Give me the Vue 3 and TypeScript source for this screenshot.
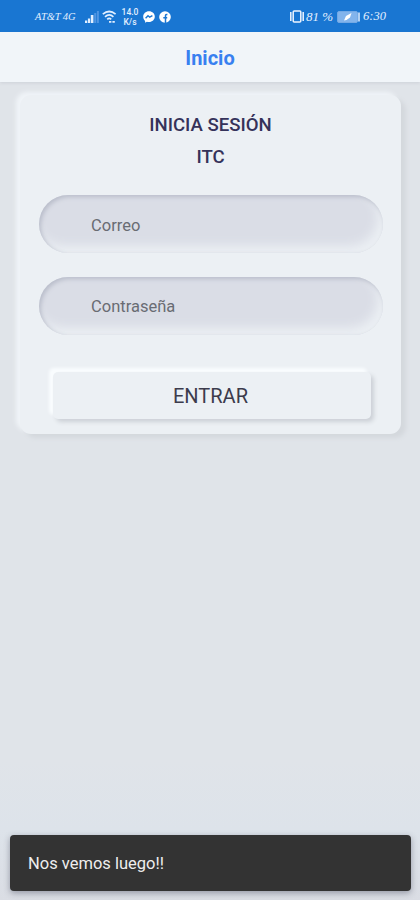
<script setup lang="ts">
import { ref } from 'vue'

const email = ref<string>('')
const password = ref<string>('')
</script>

<template>
  <div class="screen">
    <div class="status">
      <div class="group left">
        <span class="carrier">AT&amp;T 4G</span>
        <svg class="signal" width="15" height="12" viewBox="0 0 15 12">
          <path d="M0 12V9.500h2.200V12zM2.900 12V7.500h2.200V12zM5.800 12V4h2.600v8z" fill="#e2efff" />
          <path d="M9.200 12V2h2v10zM11.900 12V0h2v12z" fill="#4f95e2" />
        </svg>
        <svg class="wifi" width="15" height="13" viewBox="0 0 15 13" fill="none" stroke="#e2efff" stroke-width="1.700">
          <path d="M.8 4.2Q7.2-1.2 13.6 4.2M3 6.8Q7.2 3 11.4 6.8M5.2 9.4Q7.2 7.400 9.2 9.400" />
          <path d="M7 11.800h6" stroke-dasharray="2.400 1" />
        </svg>
        <span class="rate"><span>14.0</span><span>K/s</span></span>
        <svg class="chat" width="12" height="12" viewBox="0 0 12 12">
          <path d="M6 .2C2.700.2.2 2.600.2 5.700c0 1.700.7 3.200 1.900 4.200v1.900l1.800-1c.7.2 1.400.3 2.100.3 3.300 0 5.800-2.400 5.800-5.500S9.300.2 6 .2z" fill="#fff" />
          <path d="M2.600 7.200 5 4.700 6.700 6.200 9.400 4.600" fill="none" stroke="#1976d2" stroke-width="1.400" />
        </svg>
        <svg class="social" width="12" height="12" viewBox="0 0 12 12">
          <circle cx="6" cy="6" r="5.800" fill="#fff" />
          <path d="M6.500 12V4.800q0-1.500 1.900-1.300M4.300 6.700h3.900" fill="none" stroke="#1976d2" stroke-width="1.500" />
        </svg>
      </div>
      <div class="group right">
        <svg class="vibrate" width="16" height="13" viewBox="0 0 16 13" fill="none" stroke="#eef5ff">
          <rect x="4.200" y="1" width="7.600" height="11" rx="1" stroke-width="1.500" />
          <path d="M1.800 2v9M14.200 2v9" stroke-width="1.500" />
        </svg>
        <span class="percent">81 %</span>
        <svg class="battery" width="23" height="12" viewBox="0 0 23 12">
          <rect x=".5" y=".5" width="20" height="11" rx="1.500" fill="#82b4ec" stroke="#73a9e5" />
          <path d="M7 9.500 9 5 14.500 2 13 6.500 9.500 9z" fill="#fff" />
          <path d="M22 1.500v9" stroke="#d9e9fb" stroke-width="1.600" />
        </svg>
        <span class="clock">6:30</span>
      </div>
    </div>

    <header class="toolbar"><h1>Inicio</h1></header>

    <main>
      <form class="card" @submit.prevent>
        <h2>INICIA SESIÓN<br />ITC</h2>
        <input v-model="email" class="email" type="email" placeholder="Correo" />
        <input v-model="password" type="password" placeholder="Contraseña" />
        <button type="submit">ENTRAR</button>
      </form>
    </main>

    <div class="toast" role="status">Nos vemos luego!!</div>
  </div>
</template>

<style>
body {
  margin: 0;
}
</style>

<style scoped>
.screen {
  box-sizing: border-box;
  height: 900px;
  display: flex;
  flex-direction: column;
  overflow: hidden;
  background: linear-gradient(#e0e4e9 0, #e0e4e9 760px, #dde3ea 830px, #dadde4 900px);
  font-family: Roboto, "Liberation Sans", sans-serif;
}
.status {
  box-sizing: border-box;
  height: 32px;
  flex: none;
  display: flex;
  justify-content: space-between;
  padding: 1px 34px 0 35px;
  background: #1976d2;
  color: #e2efff;
}
.group {
  display: flex;
  align-items: center;
}
.carrier,
.percent,
.clock {
  font-family: "Liberation Serif", serif;
  font-style: italic;
  white-space: nowrap;
}
.carrier {
  width: 50px;
  font-size: 10.5px;
  letter-spacing: -0.1px;
}
.wifi {
  margin-left: 2px;
}
.rate {
  width: 18px;
  margin-left: 4px;
  display: flex;
  flex-direction: column;
  align-items: center;
  font-size: 8.5px;
  font-weight: 500;
  line-height: 10px;
}
.chat {
  margin-left: 4px;
}
.social {
  margin-left: 4px;
}
.percent {
  margin-left: 1px;
  width: 31px;
  font-size: 13px;
}
.clock {
  margin-left: 3px;
  font-size: 12.5px;
}
.toolbar {
  height: 50px;
  flex: none;
  display: flex;
  align-items: center;
  justify-content: center;
  background: #f1f5f9;
  box-shadow: 0 1px 3px rgba(120, 130, 145, 0.18);
}
h1 {
  margin: 2px 0 0;
  font-size: 20px;
  font-weight: 700;
  line-height: 24px;
  color: #3880f0;
}
main {
  flex: 1;
  padding: 13px 19px 0 20px;
}
.card {
  box-sizing: border-box;
  height: 339px;
  display: flex;
  flex-direction: column;
  padding: 15px 18px 0 19px;
  border-radius: 11px;
  background: #ecf0f4;
  box-shadow: 5px 4px 4px #d4d8dd, -4px -3px 4px #f0f4f8;
}
h2 {
  margin: 0 1px 22px 0;
  text-align: center;
  font-size: 18.6px;
  font-weight: 500;
  line-height: 31.5px;
  color: #35325a;
}
input {
  box-sizing: border-box;
  width: 344px;
  height: 58px;
  margin: 0 0 24px;
  padding: 1px 52px 0;
  border: 0;
  border-radius: 29px;
  outline: 0;
  background: #dadde6;
  box-shadow: inset 2px 2px 4px #b9bdca, inset -5px -7px 11px #ecf0f4;
  font-family: inherit;
  font-size: 16.5px;
  color: #5d6068;
}
.email {
  padding-top: 2px;
}
input::placeholder {
  color: #696c73;
  opacity: 1;
}
button {
  width: 318px;
  height: 47px;
  margin: 13px 0 0 14px;
  padding: 0 3px 0 0;
  border: 0;
  border-radius: 5px;
  background: #ecf0f4;
  box-shadow: 3px 3px 4px #cdd1d7, -4px -4px 3px #f9fcfe;
  font-family: inherit;
  font-size: 20px;
  font-weight: 400;
  color: #3c3b4c;
}
.toast {
  box-sizing: border-box;
  flex: none;
  height: 56px;
  margin: 0 9px 9px 10px;
  padding: 0 18px;
  display: flex;
  align-items: center;
  border-radius: 4px;
  background: #333;
  box-shadow: 0 2px 6px rgba(60, 65, 85, 0.45);
  color: #eee;
  font-size: 16.5px;
}
</style>
